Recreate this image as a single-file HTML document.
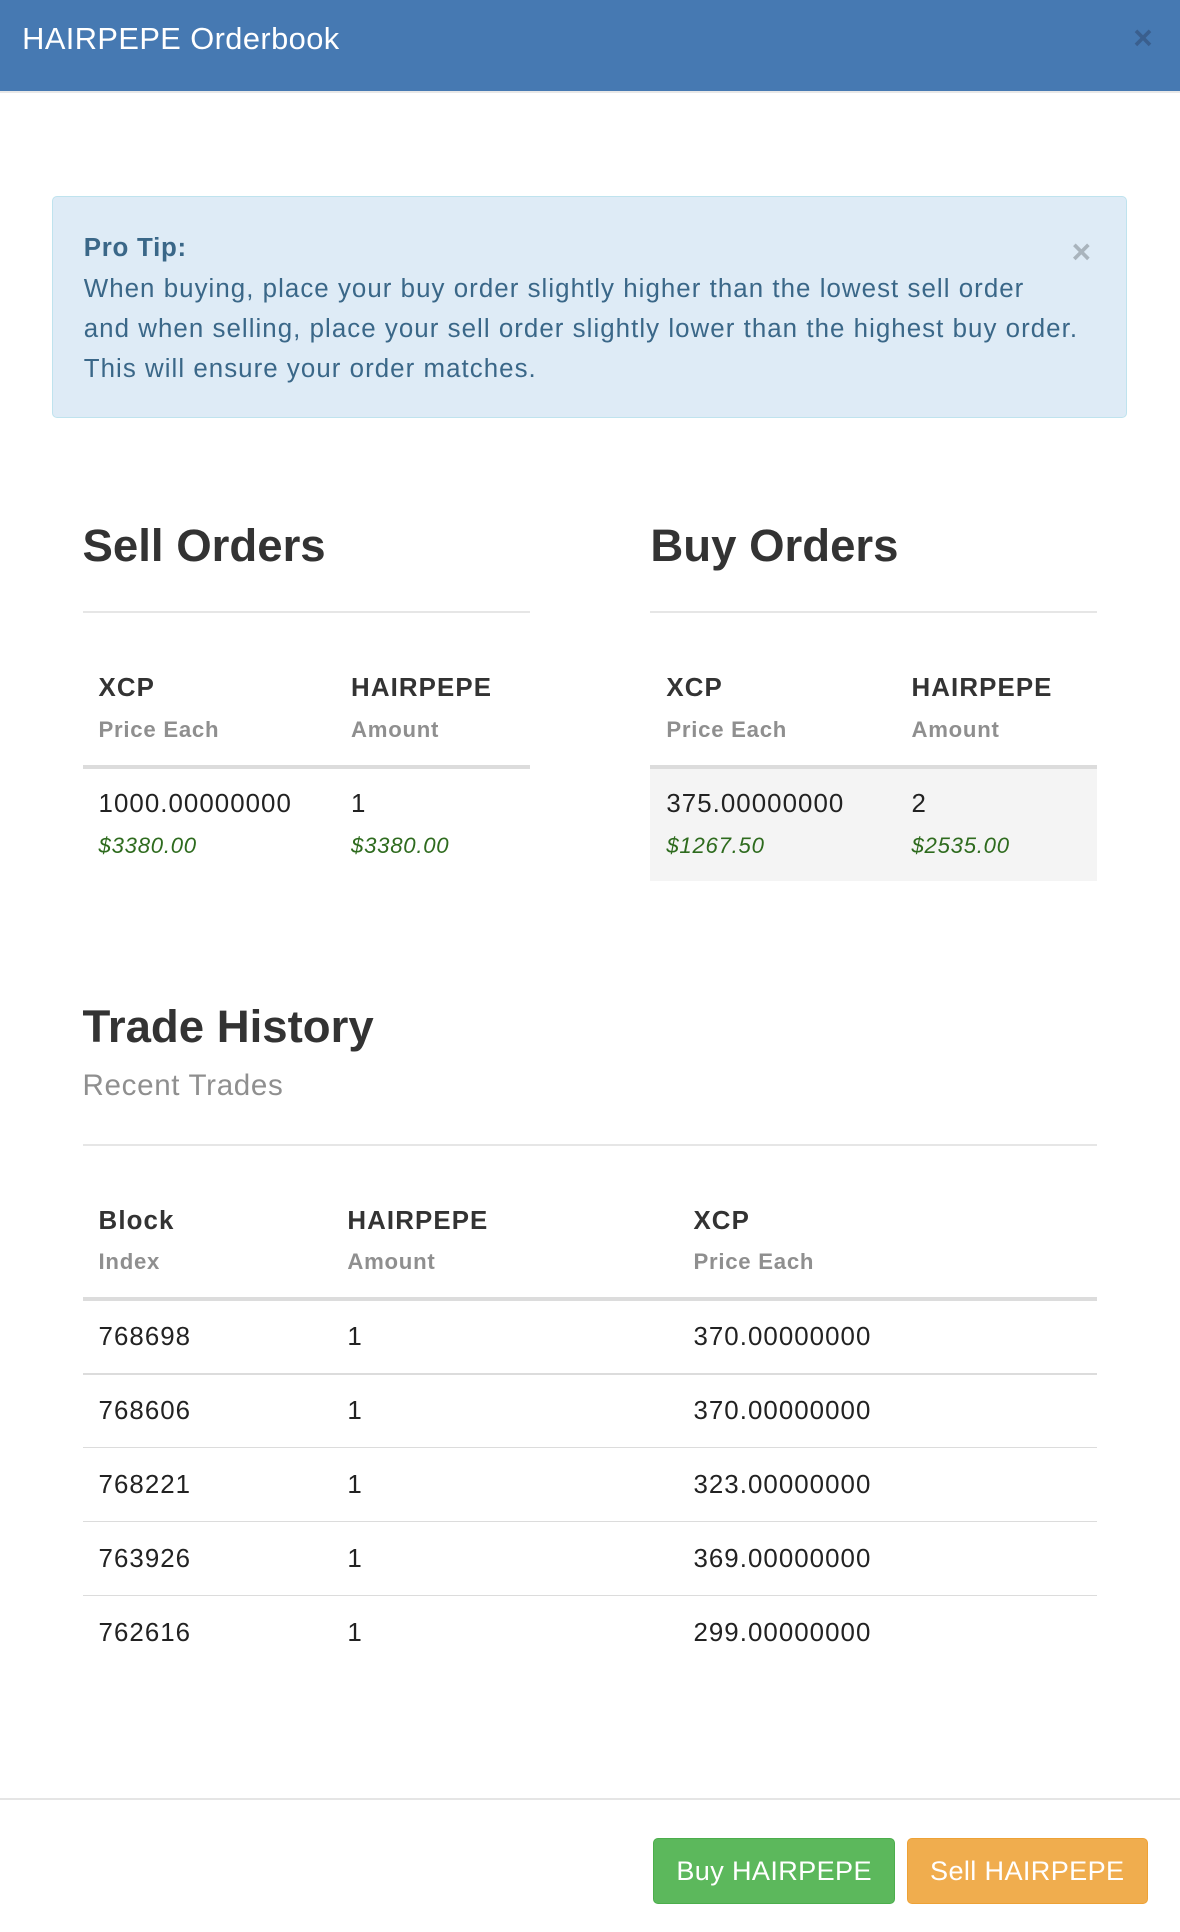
<!DOCTYPE html>
<html><head><meta charset="utf-8"><style>
html,body{margin:0;padding:0;background:#fff;}
body{width:958px;height:1568.5px;zoom:1.23173;position:relative;overflow:hidden;font-family:"Liberation Sans",sans-serif;color:#333;}
div{position:absolute;white-space:nowrap;}
.w{left:0;top:2px;width:958px;height:1560px;}
.t{height:30px;line-height:30px;}
.h{font-size:37px;font-weight:bold;}
.b{font-weight:bold;font-size:21px;color:#333;letter-spacing:0.9px;}
.g{font-weight:bold;font-size:18px;color:#8f8f8f;letter-spacing:0.6px;}
.n{font-size:21px;color:#222;letter-spacing:0.85px;}
.u{font-style:italic;font-size:18px;color:#2e6b1e;letter-spacing:0.6px;}
.line{height:0;border-top:2px solid #e6e6e6;}
</style></head><body>
<div style="left:0;top:0;width:958px;height:74px;background:#4679b2;border-bottom:2px solid #e8e8e8;"></div>
<div class="t" style="left:18px;top:17px;font-size:25px;color:#fff;letter-spacing:0.35px;">HAIRPEPE Orderbook</div>
<div class="t" style="left:920px;top:17px;font-size:27px;color:#3a5f8e;font-weight:bold;">×</div>
<div class="w">
<div style="left:42px;top:157px;width:871px;height:179px;background:#deebf6;border:1px solid #bfe3ee;border-radius:4px;"></div>
<div class="t" style="left:68px;top:185px;font-size:21px;font-weight:bold;color:#3a6788;letter-spacing:0.6px;">Pro Tip:</div>
<div class="t" style="left:870px;top:189px;font-size:27px;color:#a9b4bd;font-weight:bold;">×</div>
<div style="left:68px;top:216px;font-size:21px;line-height:32.5px;color:#3a6788;letter-spacing:0.85px;">When buying, place your buy order slightly higher than the lowest sell order<br>and when selling, place your sell order slightly lower than the highest buy order.<br>This will ensure your order matches.</div>

<div class="t h" style="left:67px;top:427px;">Sell Orders</div>
<div class="t h" style="left:528px;top:427px;">Buy Orders</div>
<div class="line" style="left:67px;top:494px;width:363px;"></div>
<div class="line" style="left:528px;top:494px;width:363px;"></div>

<div class="t b" style="left:80px;top:542px;">XCP</div>
<div class="t b" style="left:285px;top:542px;">HAIRPEPE</div>
<div class="t g" style="left:80px;top:576px;">Price Each</div>
<div class="t g" style="left:285px;top:576px;">Amount</div>
<div style="left:67px;top:619px;width:363px;height:3px;background:#dcdcdc;"></div>
<div class="t n" style="left:80px;top:636px;">1000.00000000</div>
<div class="t n" style="left:285px;top:636px;">1</div>
<div class="t u" style="left:80px;top:670px;">$3380.00</div>
<div class="t u" style="left:285px;top:670px;">$3380.00</div>

<div class="t b" style="left:541px;top:542px;">XCP</div>
<div class="t b" style="left:740px;top:542px;">HAIRPEPE</div>
<div class="t g" style="left:541px;top:576px;">Price Each</div>
<div class="t g" style="left:740px;top:576px;">Amount</div>
<div style="left:528px;top:622px;width:363px;height:91px;background:#f4f4f4;"></div>
<div style="left:528px;top:619px;width:363px;height:3px;background:#dcdcdc;"></div>
<div class="t n" style="left:541px;top:636px;">375.00000000</div>
<div class="t n" style="left:740px;top:636px;">2</div>
<div class="t u" style="left:541px;top:670px;">$1267.50</div>
<div class="t u" style="left:740px;top:670px;">$2535.00</div>

<div class="t h" style="left:67px;top:817px;">Trade History</div>
<div class="t" style="left:67px;top:865px;font-size:24px;color:#8f8f8f;letter-spacing:0.55px;">Recent Trades</div>
<div class="line" style="left:67px;top:927px;width:824px;"></div>

<div class="t b" style="left:80px;top:975px;">Block</div>
<div class="t b" style="left:282px;top:975px;">HAIRPEPE</div>
<div class="t b" style="left:563px;top:975px;">XCP</div>
<div class="t g" style="left:80px;top:1008px;">Index</div>
<div class="t g" style="left:282px;top:1008px;">Amount</div>
<div class="t g" style="left:563px;top:1008px;">Price Each</div>
<div style="left:67px;top:1051px;width:824px;height:3px;background:#dcdcdc;"></div>

<div class="t n" style="left:80px;top:1069px;">768698</div><div class="t n" style="left:282px;top:1069px;">1</div><div class="t n" style="left:563px;top:1069px;">370.00000000</div>
<div style="left:67px;top:1113px;width:824px;height:1px;background:#dcdcdc;"></div>
<div class="t n" style="left:80px;top:1129px;">768606</div><div class="t n" style="left:282px;top:1129px;">1</div><div class="t n" style="left:563px;top:1129px;">370.00000000</div>
<div style="left:67px;top:1173px;width:824px;height:1px;background:#dcdcdc;"></div>
<div class="t n" style="left:80px;top:1189px;">768221</div><div class="t n" style="left:282px;top:1189px;">1</div><div class="t n" style="left:563px;top:1189px;">323.00000000</div>
<div style="left:67px;top:1233px;width:824px;height:1px;background:#dcdcdc;"></div>
<div class="t n" style="left:80px;top:1249px;">763926</div><div class="t n" style="left:282px;top:1249px;">1</div><div class="t n" style="left:563px;top:1249px;">369.00000000</div>
<div style="left:67px;top:1293px;width:824px;height:1px;background:#dcdcdc;"></div>
<div class="t n" style="left:80px;top:1309px;">762616</div><div class="t n" style="left:282px;top:1309px;">1</div><div class="t n" style="left:563px;top:1309px;">299.00000000</div>

<div style="left:0;top:1458px;width:958px;height:1px;background:#e5e5e5;"></div>
<div style="left:530px;top:1490px;width:197px;height:54px;background:#5cb85c;border:1px solid #4cae4c;border-radius:4px;box-sizing:border-box;color:#fff;font-size:22px;line-height:52px;text-align:center;letter-spacing:0.3px;">Buy HAIRPEPE</div>
<div style="left:736px;top:1490px;width:196px;height:54px;background:#f0ad4e;border:1px solid #eea236;border-radius:4px;box-sizing:border-box;color:#fff;font-size:22px;line-height:52px;text-align:center;letter-spacing:0.3px;">Sell HAIRPEPE</div>
</div>
</body></html>
